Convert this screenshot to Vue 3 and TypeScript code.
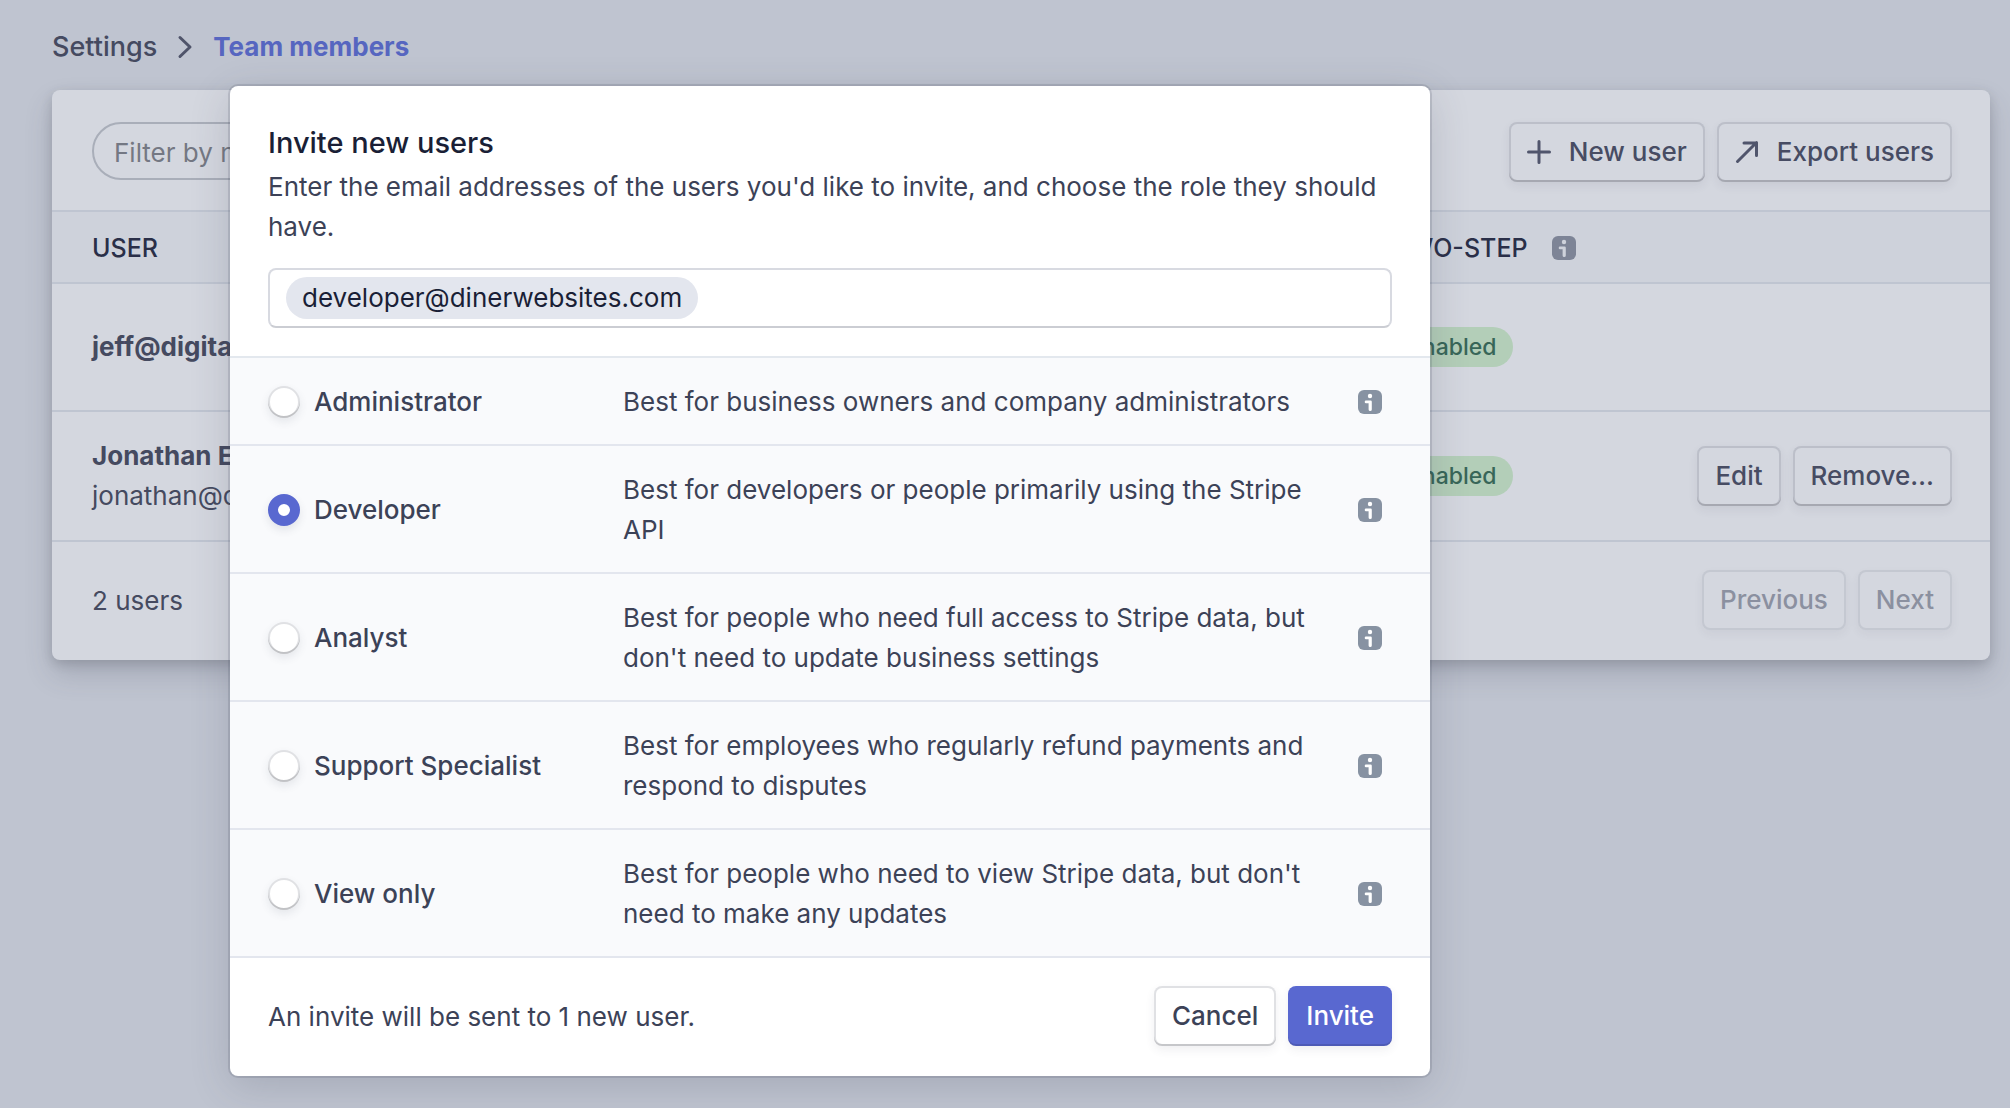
<script setup lang="ts">
import { ref } from 'vue'

interface Role {
  id: string
  name: string
  description: string
}

interface Member {
  name: string
  email?: string
  editable: boolean
}

const roles: Role[] = [
  { id: 'administrator', name: 'Administrator', description: 'Best for business owners and company administrators' },
  { id: 'developer', name: 'Developer', description: 'Best for developers or people primarily using the Stripe API' },
  { id: 'analyst', name: 'Analyst', description: "Best for people who need full access to Stripe data, but don't need to update business settings" },
  { id: 'support', name: 'Support Specialist', description: 'Best for employees who regularly refund payments and respond to disputes' },
  { id: 'view', name: 'View only', description: "Best for people who need to view Stripe data, but don't need to make any updates" },
]

const members: Member[] = [
  { name: 'jeff@digital', editable: false },
  { name: 'Jonathan E', email: 'jonathan@d', editable: true },
]

const selectedRole = ref('developer')
const filter = ref('')
const emailDraft = ref('')
</script>

<template>
  <div class="page">
    <nav class="breadcrumb" aria-label="Breadcrumb">
      <a href="#settings" class="crumb">Settings</a>
      <svg class="chevron" viewBox="0 0 16 24" aria-hidden="true"><path d="M3 2.5 13 12 3 21.5" /></svg>
      <a href="#team" class="crumb current" aria-current="page">Team members</a>
    </nav>

    <main class="card">
      <div class="toolbar">
        <input v-model="filter" class="filter" type="search" placeholder="Filter by name" aria-label="Filter users" />
        <div class="actions">
          <button type="button" class="btn muted">
            <svg class="btn-icon" viewBox="0 0 24 24" aria-hidden="true"><path d="M12 1.5v21M1.5 12h21" /></svg>
            New user
          </button>
          <button type="button" class="btn muted">
            <svg class="btn-icon" viewBox="0 0 24 24" aria-hidden="true"><path d="M2.5 21.500 21.500 2.500M9 3h12.5v12.500" /></svg>
            Export users
          </button>
        </div>
      </div>

      <table class="members">
        <thead>
          <tr>
            <th class="col-user" scope="col">USER</th>
            <th class="col-step" scope="col">
              <span class="th-inner">
                TWO-STEP
                <svg class="info" viewBox="0 0 24 24" aria-hidden="true">
                  <rect width="24" height="24" rx="6" />
                  <circle class="glyph" cx="12" cy="6" r="2.2" />
                  <path class="glyph" d="M8 10.6h4.6a1.2 1.2 0 0 1 1.2 1.2v7.6a1.6 1.6 0 0 1-3.2 0v-6.2H8a1.3 1.3 0 0 1 0-2.6z" />
                </svg>
              </span>
            </th>
            <td class="col-actions"></td>
          </tr>
        </thead>
        <tbody>
          <tr v-for="member in members" :key="member.name">
            <td class="col-user">
              <strong>{{ member.name }}</strong>
              <div v-if="member.email">{{ member.email }}</div>
            </td>
            <td class="col-step"><span class="badge">Enabled</span></td>
            <td class="col-actions">
              <div v-if="member.editable" class="actions">
                <button type="button" class="btn muted">Edit</button>
                <button type="button" class="btn muted">Remove…</button>
              </div>
            </td>
          </tr>
        </tbody>
      </table>

      <div class="card-footer">
        <span class="note">2 users</span>
        <div class="actions">
          <button type="button" class="btn muted" disabled>Previous</button>
          <button type="button" class="btn muted" disabled>Next</button>
        </div>
      </div>
    </main>

    <div class="overlay">
      <form class="dialog" role="dialog" aria-labelledby="dialog-title" @submit.prevent>
        <header class="dialog-head">
          <h2 id="dialog-title">Invite new users</h2>
          <p>Enter the email addresses of the users you'd like to invite, and choose the role they should have.</p>
          <div class="email-field">
            <span class="tag">developer@dinerwebsites.com</span>
            <input v-model="emailDraft" type="email" class="email-input" aria-label="Email addresses" />
          </div>
        </header>

        <div class="roles" role="radiogroup" aria-label="Role">
          <div v-for="role in roles" :key="role.id" class="role">
            <label class="role-name" :for="role.id">
              <input
                :id="role.id"
                v-model="selectedRole"
                type="radio"
                name="role"
                :value="role.id"
                :aria-describedby="role.id + '-text'"
              />
              {{ role.name }}
            </label>
            <p :id="role.id + '-text'" class="role-text">{{ role.description }}</p>
            <svg class="info" viewBox="0 0 24 24" aria-hidden="true">
              <rect width="24" height="24" rx="6" />
              <circle class="glyph" cx="12" cy="6" r="2.2" />
              <path class="glyph" d="M8 10.6h4.6a1.2 1.2 0 0 1 1.2 1.2v7.6a1.6 1.6 0 0 1-3.2 0v-6.2H8a1.3 1.3 0 0 1 0-2.6z" />
            </svg>
          </div>
        </div>

        <footer class="dialog-foot">
          <span class="note">An invite will be sent to 1 new user.</span>
          <div class="actions">
            <button type="button" class="btn">Cancel</button>
            <button type="submit" class="btn primary">Invite</button>
          </div>
        </footer>
      </form>
    </div>
  </div>
</template>

<style>
body {
  margin: 0;
  background: #bfc4d0;
}
</style>

<style scoped>
.page,
.page * {
  box-sizing: border-box;
}

.page {
  position: relative;
  min-height: 100vh;
  padding: 27px 20px 0 52px;
  background: #bfc4d0;
  color: #454a60;
  font-family: Inter, "Liberation Sans", sans-serif;
  font-size: 26px;
  line-height: 40px;
}

.breadcrumb {
  display: flex;
  align-items: center;
  gap: 20px;
  height: 40px;
}

.crumb {
  color: #454a60;
  font-size: 27px;
  font-weight: 500;
  text-decoration: none;
}

.crumb.current {
  color: #5666c0;
  font-size: 26px;
  font-weight: 700;
}

.chevron {
  width: 16px;
  height: 24px;
  fill: none;
  stroke: #4f546a;
  stroke-width: 3;
  stroke-linecap: round;
  stroke-linejoin: round;
}

.card {
  margin-top: 23px;
  border-radius: 8px;
  background: #d4d7df;
  box-shadow: 0 14px 28px rgba(60, 66, 87, 0.2), 0 4px 12px rgba(0, 0, 0, 0.14);
}

.toolbar {
  display: flex;
  align-items: flex-start;
  justify-content: space-between;
  height: 122px;
  padding: 32px 38px 0 40px;
  border-bottom: 2px solid #bfc5d1;
}

.filter {
  width: 400px;
  height: 58px;
  padding: 2px 20px 0;
  border: 2px solid #a9aeb9;
  border-radius: 29px;
  background: transparent;
  font: inherit;
}

.filter::placeholder {
  color: #747883;
  opacity: 1;
}

.actions {
  display: flex;
  gap: 12px;
}

.btn {
  display: flex;
  align-items: center;
  gap: 18px;
  height: 60px;
  padding: 0 18px;
  border: 0;
  border-radius: 8px;
  background: #fff;
  box-shadow: inset 0 0 0 2px rgba(60, 66, 87, 0.16), inset 0 -2px 0 rgba(0, 0, 0, 0.12), 0 4px 10px rgba(60, 66, 87, 0.08);
  color: #3c4257;
  font: inherit;
  font-weight: 500;
}

.btn.muted {
  background: #d4d7df;
  color: #474c63;
}

.btn:disabled {
  box-shadow: inset 0 0 0 2px rgba(60, 66, 87, 0.1), 0 4px 10px rgba(60, 66, 87, 0.06);
  color: #8b90a0;
}

.btn.primary {
  background: #5968d0;
  box-shadow: inset 0 -2px 0 rgba(0, 0, 0, 0.12), 0 4px 10px rgba(60, 66, 87, 0.08);
  color: #fff;
}

.btn-icon {
  width: 24px;
  height: 24px;
  fill: none;
  stroke: #50556c;
  stroke-width: 3;
  stroke-linecap: round;
  stroke-linejoin: round;
}

.members {
  width: 100%;
  table-layout: fixed;
  border-spacing: 0;
  text-align: left;
}

.members th,
.members td {
  padding: 0;
  border-bottom: 2px solid #bfc5d1;
}

.members tbody td {
  height: 128px;
}

.members tbody tr:last-child td {
  height: 130px;
}

.members thead th,
.members thead td {
  height: 72px;
  padding-top: 2px;
  background: #ced2db;
  color: #2a2f48;
  font-size: 25px;
  font-weight: 500;
}

.members .col-user {
  padding-left: 40px;
}

.col-step {
  width: 200px;
}

.col-actions {
  width: 398px;
}

.members strong {
  font-weight: 700;
}

.th-inner {
  display: flex;
  align-items: center;
  gap: 24px;
}

.members .info rect {
  fill: #7d8496;
}

.members .glyph {
  fill: #ced2db;
}

.badge {
  display: block;
  width: fit-content;
  padding: 0 16px;
  border-radius: 20px;
  background: #b3ceb8;
  color: #386658;
  font-size: 23px;
  font-weight: 500;
}

.col-actions .actions {
  justify-content: flex-end;
  padding-right: 38px;
}

.card-footer,
.dialog-foot {
  display: flex;
  align-items: flex-start;
  justify-content: space-between;
  height: 118px;
  padding: 28px 38px 0;
}

.card-footer {
  padding-left: 40px;
}

.note {
  line-height: 62px;
}

.info {
  width: 24px;
  height: 24px;
  fill: #8792a2;
}

.glyph {
  fill: #fff;
}

.overlay {
  position: absolute;
  inset: 0;
  padding: 86px 32px 32px 230px;
}

.dialog {
  max-width: 1200px;
  border-radius: 8px;
  background: #fff;
  box-shadow: 0 0 0 2px rgba(60, 66, 87, 0.16), 0 10px 40px rgba(60, 66, 87, 0.2);
  color: #3c4257;
}

.dialog-head {
  padding: 37px 38px 28px;
  border-bottom: 2px solid #e3e8ee;
}

.dialog-head h2 {
  margin: 0 0 4px;
  color: #1a1f36;
  font-size: 29px;
  font-weight: 500;
  line-height: 40px;
}

.dialog-head p {
  margin: 0 0 21px;
}

.email-field {
  display: flex;
  align-items: center;
  height: 60px;
  padding: 0 16px;
  border: 2px solid #d8dae1;
  border-bottom-color: #cbcdd3;
  border-radius: 8px;
}

.tag {
  padding: 1px 16px;
  border-radius: 21px;
  background: #e3e6ee;
  color: #1a1f36;
}

.email-input {
  flex: 1;
  min-width: 0;
  border: 0;
  outline: 0;
  background: transparent;
  font: inherit;
}

.role {
  display: grid;
  grid-template-columns: 355px 1fr 24px;
  align-items: center;
  padding: 24px 48px 22px 38px;
  border-bottom: 2px solid #e3e6ee;
  background: #f9fafc;
}

.role-name {
  display: flex;
  align-items: center;
  gap: 14px;
  font-weight: 500;
}

.role-name input {
  width: 32px;
  height: 32px;
  margin: 0;
  appearance: none;
  border-radius: 50%;
  background: #fff;
  box-shadow: inset 0 0 0 2px rgba(60, 66, 87, 0.16), inset 0 -2px 0 rgba(0, 0, 0, 0.14), 0 4px 8px rgba(60, 66, 87, 0.1);
}

.role-name input:checked {
  border: 10px solid #5968d0;
  box-shadow: 0 4px 8px rgba(60, 66, 87, 0.12);
}

.role-text {
  margin: 0;
  padding-right: 38px;
}
</style>
